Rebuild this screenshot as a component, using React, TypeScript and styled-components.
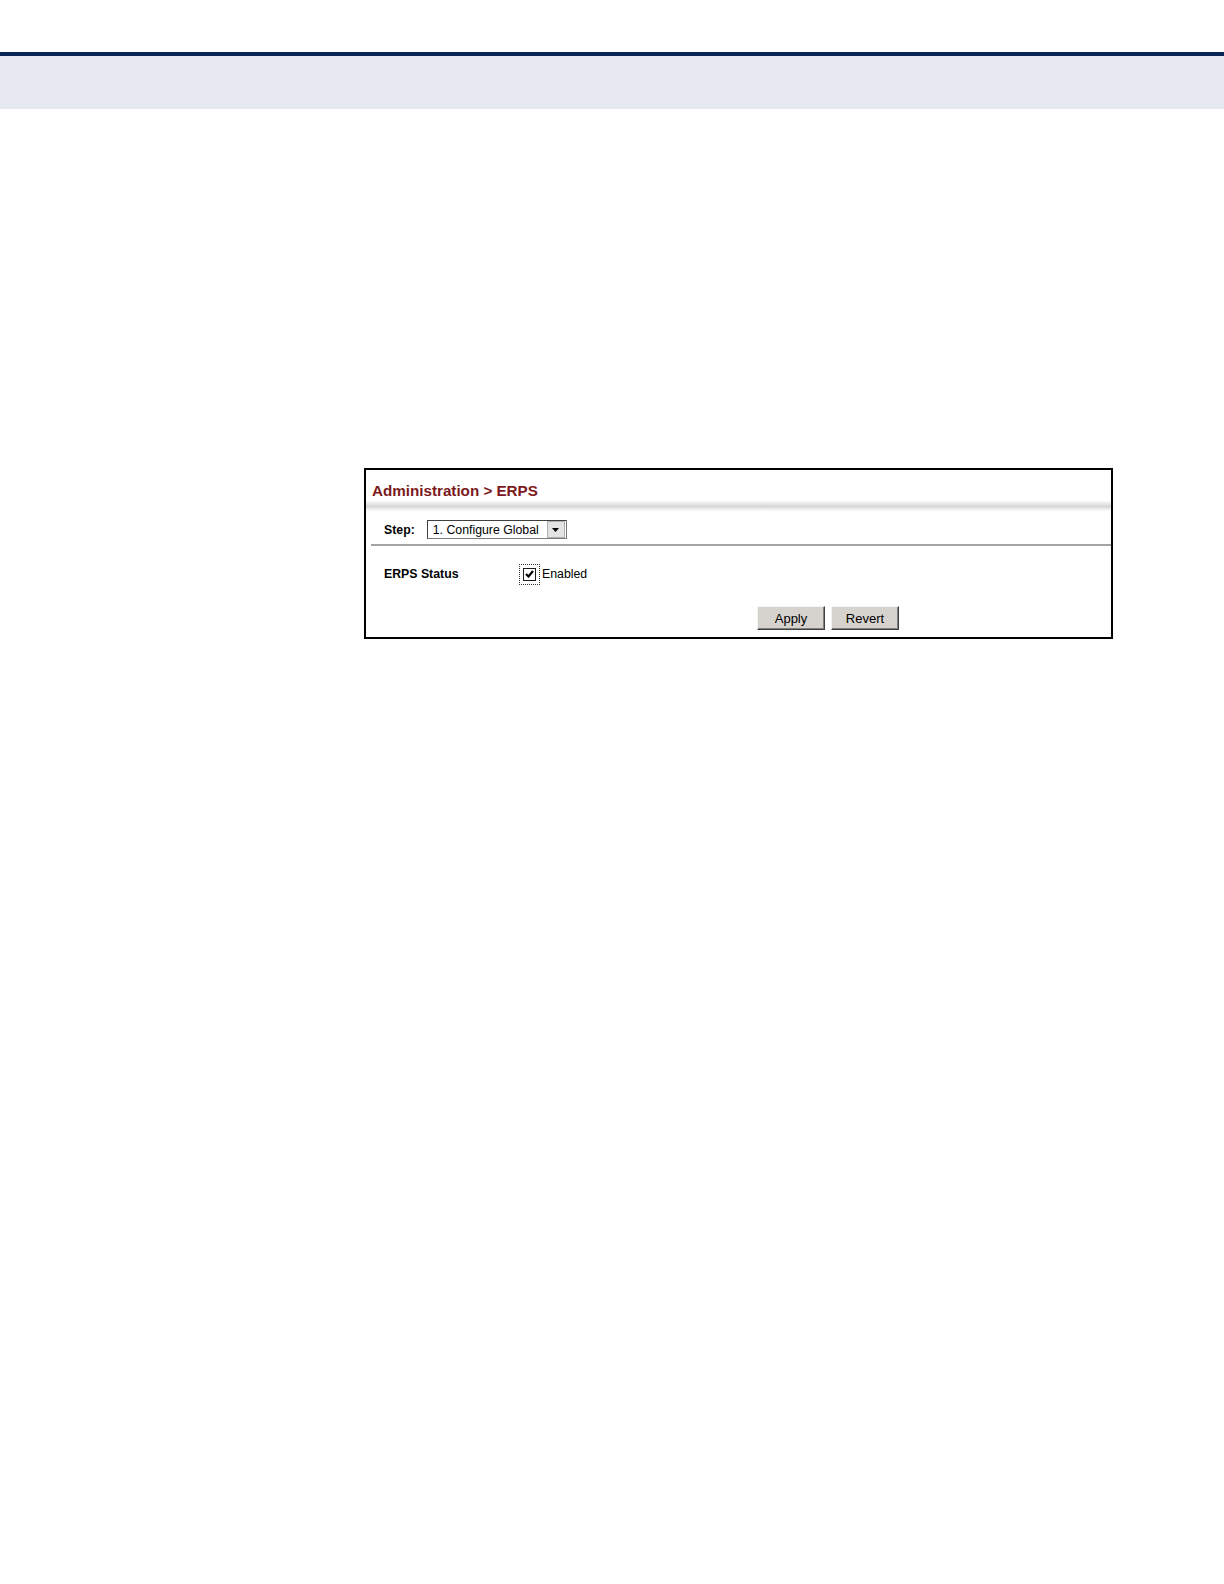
import { FC } from 'react';
import styled, { createGlobalStyle } from 'styled-components';

const GlobalStyle = createGlobalStyle`
  body {
    margin: 0;
    background: #ffffff;
    font-family: "Liberation Sans", Arial, sans-serif;
  }
`;

const Page = styled.div`
  width: 1224px;
  height: 1584px;
  padding-top: 52px;
  box-sizing: border-box;
`;

const HeaderBand = styled.div`
  height: 53px;
  border-top: 4px solid #0b2457;
  background: #e6e9f0;
`;

const Content = styled.div`
  padding: 359px 0 0 364px;
`;

const Panel = styled.div`
  width: 745px;
  height: 167px;
  border: 2px solid #000000;
  background: #ffffff;
  display: flex;
  flex-direction: column;
`;

const Title = styled.div`
  padding: 13px 0 0 6px;
  height: 16px;
  font-size: 15.2px;
  font-weight: bold;
  color: #7b1a1c;
  line-height: 16px;
`;

const TitleRule = styled.div`
  margin-top: 2px;
  height: 10px;
  background: linear-gradient(
    to bottom,
    #fafafa 0%,
    #e4e4e4 35%,
    #d6d6d6 55%,
    #eeeeee 80%,
    #fafafa 100%
  );
`;

const StepRow = styled.div`
  display: flex;
  align-items: center;
  gap: 12px;
  padding: 9px 0 0 18px;
  height: 19px;
`;

const Label = styled.span`
  font-size: 12.3px;
  font-weight: bold;
  color: #000000;
`;

const Select = styled.div`
  display: flex;
  align-items: center;
  width: 133px;
  height: 17px;
  border: 1px solid #7a7a7a;
  border-top-color: #404040;
  border-left-color: #404040;
  background: #ffffff;
  font-size: 12.3px;
  color: #000000;
  padding-left: 5px;
`;

const SelectText = styled.span`
  flex: 1;
`;

const SelectArrow = styled.div`
  width: 16px;
  height: 15px;
  margin-right: 1px;
  background: #e3e3e3;
  border: 1px solid #b0b0b0;
  display: flex;
  align-items: center;
  justify-content: center;
`;

const StepRule = styled.div`
  margin: 5px 0 0 5px;
  height: 2px;
  background: #a3a3a3;
`;

const StatusRow = styled.div`
  display: flex;
  align-items: center;
  padding: 17px 0 0 18px;
  height: 22px;
`;

const StatusLabel = styled(Label)`
  width: 135px;
`;

const CheckFocus = styled.div`
  width: 19px;
  height: 19px;
  border: 1px dotted #333333;
  display: flex;
  align-items: center;
  justify-content: center;
`;

const CheckBox = styled.div`
  width: 11px;
  height: 11px;
  border: 1px solid #1c1c1c;
  background: #ffffff;
  display: flex;
  align-items: center;
  justify-content: center;
`;

const CheckText = styled.span`
  margin-left: 2px;
  font-size: 12.3px;
  color: #000000;
`;

const ButtonRow = styled.div`
  display: flex;
  gap: 6px;
  padding: 21px 0 0 391px;
`;

const Button = styled.div<{ $width: number }>`
  width: ${(p) => p.$width}px;
  height: 24px;
  box-sizing: border-box;
  background: #d6d3ce;
  border: 1px solid;
  border-color: #f5f5f5 #404040 #404040 #f5f5f5;
  box-shadow: inset -1px -1px 0 #808080;
  display: flex;
  align-items: center;
  justify-content: center;
  font-size: 13px;
  color: #000000;
`;

const App: FC = () => (
  <>
    <GlobalStyle />
    <Page>
      <HeaderBand />
      <Content>
        <Panel>
          <Title>Administration &gt; ERPS</Title>
          <TitleRule />
          <StepRow>
            <Label>Step:</Label>
            <Select>
              <SelectText>1. Configure Global</SelectText>
              <SelectArrow>
                <svg width="7" height="4" viewBox="0 0 7 4">
                  <path d="M0 0 H7 L3.5 4 Z" fill="#000" />
                </svg>
              </SelectArrow>
            </Select>
          </StepRow>
          <StepRule />
          <StatusRow>
            <StatusLabel>ERPS Status</StatusLabel>
            <CheckFocus>
              <CheckBox>
                <svg width="9" height="8" viewBox="0 0 9 8">
                  <path
                    d="M1 4 L3.5 6.5 L8 1"
                    fill="none"
                    stroke="#000"
                    strokeWidth="2.2"
                  />
                </svg>
              </CheckBox>
            </CheckFocus>
            <CheckText>Enabled</CheckText>
          </StatusRow>
          <ButtonRow>
            <Button $width={68}>Apply</Button>
            <Button $width={68}>Revert</Button>
          </ButtonRow>
        </Panel>
      </Content>
    </Page>
  </>
);

export default App;
